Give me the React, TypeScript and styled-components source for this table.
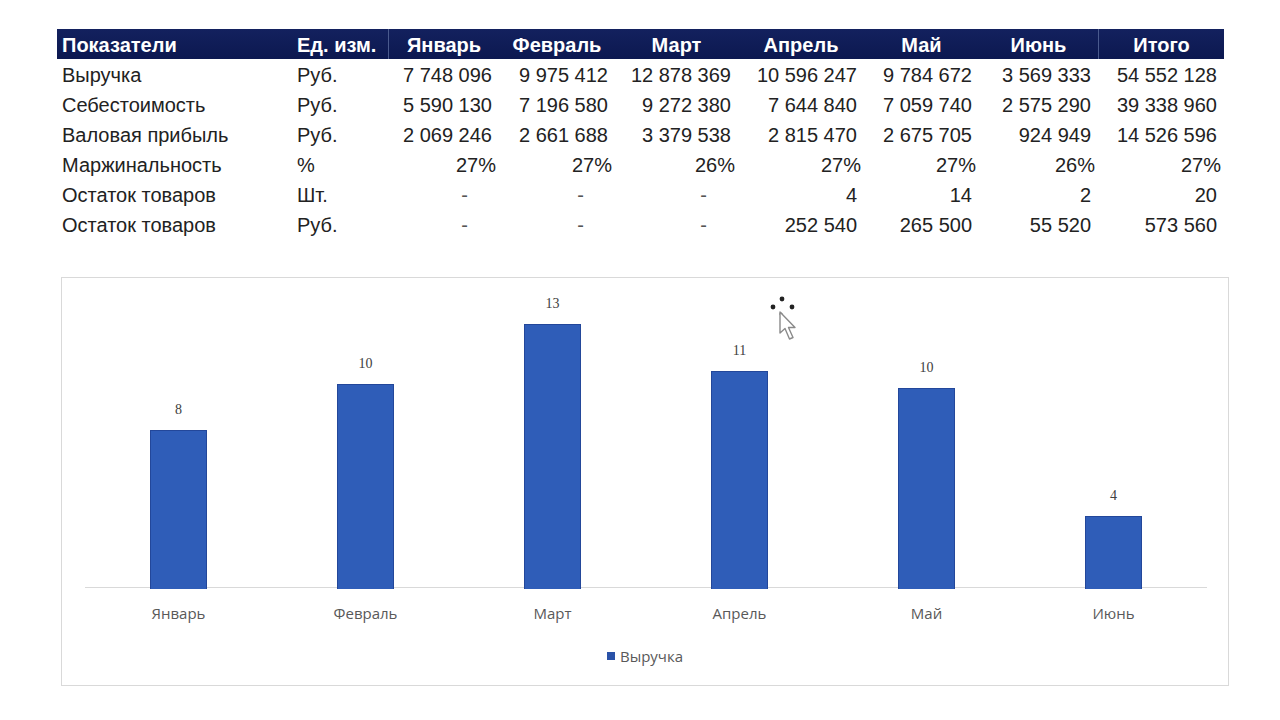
import React from 'react'
import styled, { createGlobalStyle } from 'styled-components'

const GlobalStyle = createGlobalStyle`
  body {
    margin: 0;
    background: #ffffff;
    font-family: 'Liberation Sans', Arial, sans-serif;
    color: #1a1a1a;
  }
`

const COLS = '235px 96px 111px 116px 123px 126px 115px 119px 126px'
const MONTHS = ['Январь', 'Февраль', 'Март', 'Апрель', 'Май', 'Июнь']
const NB = '\u00A0'

type Cell = { v: string; kind: 'num' | 'pct' | 'dash' }

const n = (v: string): Cell => ({ v: v.replace(/ /g, NB), kind: 'num' })
const p = (v: string): Cell => ({ v, kind: 'pct' })
const d: Cell = { v: '-', kind: 'dash' }

const rows: { label: string; unit: string; cells: Cell[] }[] = [
  {
    label: 'Выручка',
    unit: 'Руб.',
    cells: ['7 748 096', '9 975 412', '12 878 369', '10 596 247', '9 784 672', '3 569 333', '54 552 128'].map(n),
  },
  {
    label: 'Себестоимость',
    unit: 'Руб.',
    cells: ['5 590 130', '7 196 580', '9 272 380', '7 644 840', '7 059 740', '2 575 290', '39 338 960'].map(n),
  },
  {
    label: 'Валовая прибыль',
    unit: 'Руб.',
    cells: ['2 069 246', '2 661 688', '3 379 538', '2 815 470', '2 675 705', '924 949', '14 526 596'].map(n),
  },
  {
    label: 'Маржинальность',
    unit: '%',
    cells: ['27%', '27%', '26%', '27%', '27%', '26%', '27%'].map(p),
  },
  {
    label: 'Остаток товаров',
    unit: 'Шт.',
    cells: [d, d, d, n('4'), n('14'), n('2'), n('20')],
  },
  {
    label: 'Остаток товаров',
    unit: 'Руб.',
    cells: [d, d, d, n('252 540'), n('265 500'), n('55 520'), n('573 560')],
  },
]

const revenue = [7.748096, 9.975412, 12.878369, 10.596247, 9.784672, 3.569333]

const Page = styled.div`
  padding: 29px 0 0 57px;
`

const Table = styled.div`
  width: 1167px;
`

const HeaderRow = styled.div`
  display: grid;
  grid-template-columns: ${COLS};
  height: 30px;
  background: linear-gradient(#13215e, #0c1850);
  color: #ffffff;
  font-weight: 700;
  font-size: 20px;
`

const HeadCell = styled.div<{ $align?: 'left' | 'center'; $divider?: boolean }>`
  display: flex;
  align-items: center;
  justify-content: ${(p) => (p.$align === 'left' ? 'flex-start' : 'center')};
  padding: 2px 0 0 ${(p) => (p.$align === 'left' ? '5px' : '0')};
  border-left: ${(p) => (p.$divider ? '1px solid #4a5a8e' : 'none')};
  white-space: nowrap;
`

const Row = styled.div`
  display: grid;
  grid-template-columns: ${COLS};
  height: 30px;
  font-size: 20px;
  color: #222;
`

const TextCell = styled.div`
  display: flex;
  align-items: center;
  padding: 3px 0 0 5px;
  white-space: nowrap;
`

const NumCell = styled.div<{ $kind: Cell['kind'] }>`
  display: flex;
  align-items: center;
  justify-content: flex-end;
  white-space: nowrap;
  padding-top: 3px;
  padding-right: ${(p) => (p.$kind === 'dash' ? '31px' : p.$kind === 'pct' ? '3px' : '7px')};
  color: ${(p) => (p.$kind === 'dash' ? '#555' : 'inherit')};
`

const ChartBox = styled.div`
  position: relative;
  margin: 38px 0 0 4px;
  width: 1166px;
  height: 407px;
  border: 1px solid #d9d9d9;
  box-sizing: content-box;
  display: flex;
  flex-direction: column;
`

const Plot = styled.div`
  margin: 18px 21px 0 23px;
  height: 291px;
  display: grid;
  grid-template-columns: repeat(6, 1fr);
  border-bottom: 1px solid #d9d9d9;
`

const BarSlot = styled.div`
  display: flex;
  flex-direction: column;
  justify-content: flex-end;
  align-items: center;
`

const DataLabel = styled.div`
  font-family: 'Liberation Serif', 'Times New Roman', serif;
  font-size: 14px;
  line-height: 16px;
  color: #404040;
  margin-bottom: 12px;
`

const Bar = styled.div`
  width: 57px;
  background: #2f5db8;
  border: 1px solid #23479a;
  border-bottom: none;
  box-sizing: border-box;
`

const Categories = styled.div`
  margin: 16px 21px 0 23px;
  display: grid;
  grid-template-columns: repeat(6, 1fr);
`

const Category = styled.div`
  text-align: center;
  font-family: 'Open Sans', sans-serif;
  font-size: 15px;
  line-height: 18px;
  color: #595959;
`

const Legend = styled.div`
  margin-top: 25px;
  display: flex;
  justify-content: center;
  align-items: center;
  gap: 5px;
  font-family: 'Open Sans', sans-serif;
  font-size: 15px;
  line-height: 18px;
  color: #595959;
`

const LegendKey = styled.span`
  width: 8px;
  height: 8px;
  background: #2a52a8;
`

const Cursor = styled.svg`
  position: absolute;
  left: 706px;
  top: 15px;
`

const MoveCursor = () => (
  <Cursor width="40" height="54" viewBox="0 0 40 54">
    <circle cx="14" cy="6" r="2.4" fill="#222" />
    <circle cx="5" cy="14" r="2.4" fill="#222" />
    <circle cx="24" cy="14" r="2.4" fill="#222" />
    <circle cx="13" cy="21" r="1.6" fill="#666" />
    <path
      d="M12 19 L12 40 L17 35.5 L21.5 46 L25 44.5 L20.5 34.5 L27 34.5 Z"
      fill="#ffffff"
      stroke="#8a8a8a"
      strokeWidth="1.4"
      strokeLinejoin="round"
    />
  </Cursor>
)

const App: React.FC = () => {
  return (
    <>
      <GlobalStyle />
      <Page>
        <Table>
          <HeaderRow>
            <HeadCell $align="left">Показатели</HeadCell>
            <HeadCell $align="left">Ед. изм.</HeadCell>
            {MONTHS.map((m, i) => (
              <HeadCell key={m} $divider={i === 0}>
                {m}
              </HeadCell>
            ))}
            <HeadCell $divider>Итого</HeadCell>
          </HeaderRow>
          {rows.map((r, i) => (
            <Row key={i}>
              <TextCell>{r.label}</TextCell>
              <TextCell>{r.unit}</TextCell>
              {r.cells.map((c, j) => (
                <NumCell key={j} $kind={c.kind}>
                  {c.v}
                </NumCell>
              ))}
            </Row>
          ))}
        </Table>

        <ChartBox>
          <Plot>
            {revenue.map((v, i) => (
              <BarSlot key={i}>
                <DataLabel>{Math.round(v)}</DataLabel>
                <Bar style={{ height: `${v * 20.6}px` }} />
              </BarSlot>
            ))}
          </Plot>
          <Categories>
            {MONTHS.map((m) => (
              <Category key={m}>{m}</Category>
            ))}
          </Categories>
          <Legend>
            <LegendKey />
            Выручка
          </Legend>
          <MoveCursor />
        </ChartBox>
      </Page>
    </>
  )
}

export default App
